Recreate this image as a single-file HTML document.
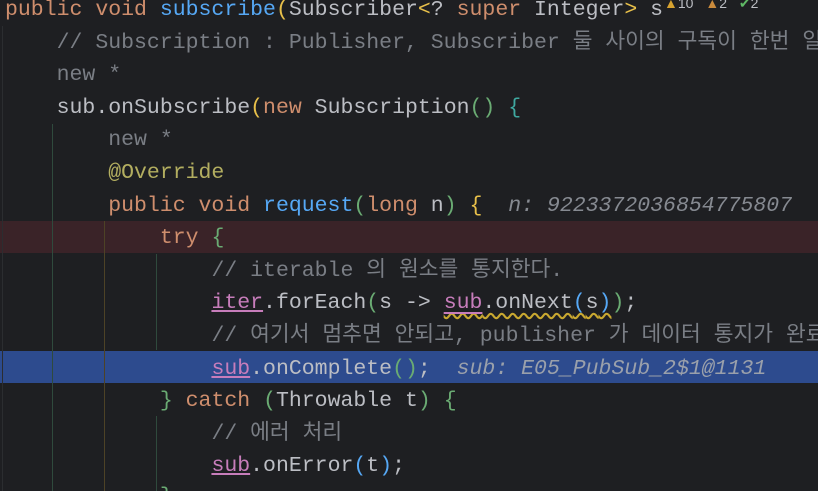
<!DOCTYPE html>
<html><head><meta charset="utf-8"><style>
html,body{margin:0;padding:0;width:818px;height:491px;overflow:hidden;background:#1e1f22;}
#r{position:relative;width:818px;height:491px;overflow:hidden;}
.l{position:absolute;left:5px;height:32.6px;line-height:32.6px;white-space:pre;font-family:"Liberation Mono","Noto Sans CJK KR",monospace;font-size:21.5px;color:#bcbec4;width:813px;overflow:hidden;}
.k{color:#cf8e6d}.f{color:#56a8f5}.c{color:#7a7e85}.y{color:#e8c04a}.g{color:#6aab73}.b{color:#56a8f5}
.h{color:#868a91;font-style:italic}.p{color:#c77dbb;text-decoration:underline}.ann{color:#b3ae60}
.w{text-decoration:underline wavy #c9a830;text-underline-offset:4px}
.band{position:absolute;left:0;width:818px;height:32px}
.v{position:absolute;width:1px}
</style></head><body><div id="r">
<div class="band" style="top:221px;background:#3a2328"></div>
<div class="band" style="top:351px;background:#2d4b8e"></div>
<div class="v" style="left:2px;top:26px;height:465px;background:#2b2d30"></div>
<div class="v" style="left:52px;top:124px;height:367px;background:#2f4a3d"></div>
<div class="v" style="left:104px;top:221px;height:270px;background:#4d4226"></div>
<div class="v" style="left:156px;top:254px;height:96px;background:#2f4a3d"></div>
<div class="v" style="left:156px;top:416px;height:75px;background:#2f4a3d"></div>
<div class="l" style="top:-6px"><span class="k">public void </span><span class="f">subscribe</span><span class="y">(</span>Subscriber<span class="y">&lt;</span>? <span class="k">super</span> Integer<span class="y">&gt;</span> s</div>
<div style="position:absolute;left:664px;top:-2px;font:14px 'Liberation Sans',sans-serif;color:#bcbec4;background:#1e1f22;width:154px;height:12px;line-height:10px;word-spacing:8px;overflow:hidden;white-space:nowrap"><span style="color:#d6a230">▲</span>10 <span style="color:#c98a3c">▲</span>2 <span style="color:#5fb865">✔</span>2</div>
<div class="l" style="top:26.6px">    <span class="c">// Subscription : Publisher, Subscriber 둘 사이의 구독이 한번 일어</span></div>
<div class="l" style="top:59.2px">    <span class="c">new *</span></div>
<div class="l" style="top:91.8px">    sub.onSubscribe<span class="y">(</span><span class="k">new</span> Subscription<span class="g">()</span> <span style="color:#3fa8a0">{</span></div>
<div class="l" style="top:124.4px">        <span class="c">new *</span></div>
<div class="l" style="top:157px">        <span class="ann">@Override</span></div>
<div class="l" style="top:189.6px">        <span class="k">public void </span><span class="f">request</span><span class="g">(</span><span class="k">long</span> n<span class="g">)</span> <span class="y">{</span>  <span class="h">n: 9223372036854775807</span></div>
<div class="l" style="top:222.2px">            <span class="k">try</span> <span class="g">{</span></div>
<div class="l" style="top:254.8px">                <span class="c">// iterable 의 원소를 통지한다.</span></div>
<div class="l" style="top:287.4px">                <span class="p">iter</span>.forEach<span class="g">(</span>s -&gt; <span class="w"><span class="p">sub</span>.onNext<span class="b">(</span>s<span class="b">)</span></span><span class="g">)</span>;</div>
<div class="l" style="top:320px">                <span class="c">// 여기서 멈추면 안되고, publisher 가 데이터 통지가 완료했</span></div>
<div class="l" style="top:352.6px">                <span class="p">sub</span>.onComplete<span class="g">()</span>;  <span class="h" style="color:#9aa0ab">sub: E05_PubSub_2$1@1131</span></div>
<div class="l" style="top:385.2px">            <span class="g">}</span> <span class="k">catch</span> <span class="g">(</span>Throwable t<span class="g">)</span> <span class="g">{</span></div>
<div class="l" style="top:417.8px">                <span class="c">// 에러 처리</span></div>
<div class="l" style="top:450.4px">                <span class="p">sub</span>.onError<span class="b">(</span>t<span class="b">)</span>;</div>
<div class="l" style="top:483px;height:8px;line-height:8px"><span style="position:relative;top:10px">            <span class="g">}</span></span></div>
</div></body></html>
